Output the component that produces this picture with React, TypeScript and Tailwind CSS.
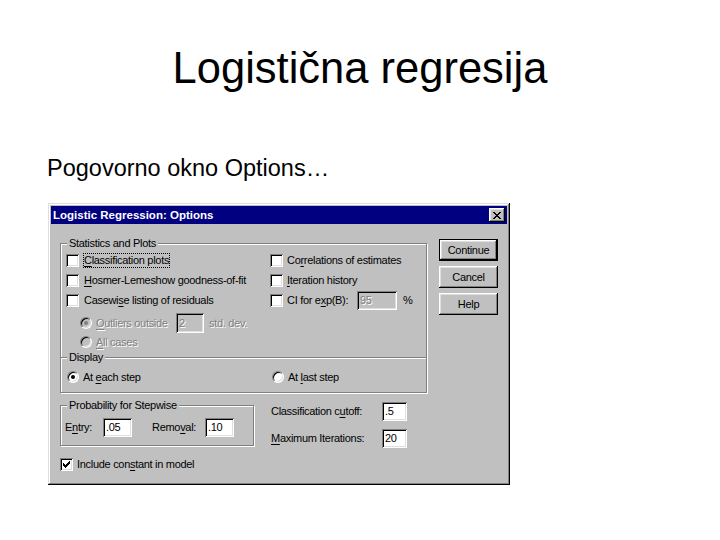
import React from 'react';

// Win95 style helpers
const sunken =
  'shadow-[inset_1px_1px_0_#808080,inset_-1px_-1px_0_#fff,inset_2px_2px_0_#000,inset_-2px_-2px_0_#dfdfdf]';
const raised =
  'shadow-[inset_-1px_-1px_0_#000,inset_1px_1px_0_#fff,inset_-2px_-2px_0_#808080,inset_2px_2px_0_#dfdfdf]';
const etched = 'border border-[#808080] shadow-[inset_1px_1px_0_#fff,1px_1px_0_#fff]';
const disabledText = 'text-[#808080] [text-shadow:1px_1px_0_#fff]';

function Hot({ text, at }: { text: string; at: number }) {
  if (at < 0) return <>{text}</>;
  return (
    <>
      {text.slice(0, at)}
      <span className="underline underline-offset-[2px] decoration-1">{text[at]}</span>
      {text.slice(at + 1)}
    </>
  );
}

function pixels(rows: string[]) {
  let d = '';
  rows.forEach((row, y) => {
    row.split('').forEach((c, x) => {
      if (c === 'x') d += `M${x} ${y}h1v1h-1z`;
    });
  });
  return d;
}

const checkMark = pixels([
  '......x',
  '.....xx',
  'x...xxx',
  'xx.xxx.',
  'xxxxx..',
  '.xxx...',
  '..x....',
]);

const closeGlyph = pixels([
  'xx....xx',
  '.xx..xx.',
  '..xxxx..',
  '...xx...',
  '..xxxx..',
  '.xx..xx.',
  'xx....xx',
]);

function Check({ checked = false }: { checked?: boolean }) {
  return (
    <span className={`w-[13px] h-[13px] shrink-0 bg-white flex items-center justify-center ${sunken}`}>
      {checked && (
        <svg width="7" height="7" viewBox="0 0 7 7" shapeRendering="crispEdges">
          <path d={checkMark} fill="#000" />
        </svg>
      )}
    </span>
  );
}

function Radio({ on = false, disabled = false }: { on?: boolean; disabled?: boolean }) {
  return (
    <span
      className={`w-[12px] h-[12px] shrink-0 rounded-full border border-t-[#808080] border-l-[#808080] border-r-white border-b-white shadow-[inset_1px_1px_0_#000,inset_-1px_-1px_0_#dfdfdf] flex items-center justify-center ${
        disabled ? 'bg-[#c0c0c0]' : 'bg-white'
      }`}
    >
      {on && <span className={`w-[4px] h-[4px] rounded-full ${disabled ? 'bg-[#808080]' : 'bg-black'}`} />}
    </span>
  );
}

function Field({ value, w, h = 'h-[19px]', disabled = false }: { value: string; w: string; h?: string; disabled?: boolean }) {
  return (
    <span
      className={`${w} ${h} shrink-0 flex items-center pl-[3px] ${sunken} ${
        disabled ? `bg-[#c0c0c0] ${disabledText}` : 'bg-white'
      }`}
    >
      {value}
    </span>
  );
}

function Button({ label, isDefault = false }: { label: string; isDefault?: boolean }) {
  return (
    <div
      className={`h-[22px] flex items-center justify-center bg-[#c0c0c0] ${
        isDefault ? 'border border-black' : ''
      } ${raised}`}
    >
      {label}
    </div>
  );
}

export default function App() {
  return (
    <div className="w-[720px] h-[540px] bg-white overflow-hidden text-black font-['Liberation_Sans',Arial,sans-serif]">
      <h1 className="pt-[43px] text-center text-[43.5px] leading-[50px]">Logistična regresija</h1>
      <p className="mt-[61px] ml-[47px] text-[23.5px] leading-[28px]">Pogovorno okno Options…</p>

      {/* dialog */}
      <div
        className={`ml-[48px] mt-[21px] w-[462px] h-[282px] bg-[#c0c0c0] flex flex-col text-[11px] leading-[13px] tracking-[-0.3px] shadow-[inset_-1px_-1px_0_#000,inset_1px_1px_0_#dfdfdf,inset_-2px_-2px_0_#808080,inset_2px_2px_0_#fff]`}
      >
        <div className="mx-[3px] mt-[3px] h-[18px] bg-[#000080] flex items-center justify-between pl-[2px] pr-[2px]">
          <span className="text-white font-bold text-[11.5px] tracking-normal">Logistic Regression: Options</span>
          <span className={`w-[16px] h-[14px] bg-[#c0c0c0] flex items-center justify-center ${raised}`}>
            <svg width="8" height="7" viewBox="0 0 8 7" shapeRendering="crispEdges">
              <path d={closeGlyph} fill="#000" />
            </svg>
          </span>
        </div>

        <div className="flex items-start pl-[12px]">
          <div className="w-[367px] mt-[19px] flex flex-col">
            {/* Statistics and Plots */}
            <div className={`relative h-[150px] ${etched} pt-[6px] pl-[5px]`}>
              <span className="absolute -top-[8px] left-[6px] px-[2px] bg-[#c0c0c0] leading-[14px]">Statistics and Plots</span>

              <div className="grid grid-cols-[204px_1fr]">
                <div className="h-[20px] flex items-center gap-[5px]">
                  <Check />
                  <span className="outline-1 outline-dotted outline-black">
                    <Hot text="Classification plots" at={0} />
                  </span>
                </div>
                <div className="h-[20px] flex items-center gap-[4px]">
                  <Check />
                  <span>
                    <Hot text="Correlations of estimates" at={2} />
                  </span>
                </div>
                <div className="h-[20px] flex items-center gap-[5px]">
                  <Check />
                  <span>
                    <Hot text="Hosmer-Lemeshow goodness-of-fit" at={0} />
                  </span>
                </div>
                <div className="h-[20px] flex items-center gap-[4px]">
                  <Check />
                  <span>
                    <Hot text="Iteration history" at={0} />
                  </span>
                </div>
                <div className="h-[20px] flex items-center gap-[5px]">
                  <Check />
                  <span>
                    <Hot text="Casewise listing of residuals" at={6} />
                  </span>
                </div>
                <div className="h-[20px] flex items-center gap-[4px]">
                  <Check />
                  <span className="w-[66px] shrink-0">
                    <Hot text="CI for exp(B):" at={8} />
                  </span>
                  <Field value="95" w="w-[40px]" disabled />
                  <span className="ml-[2px]">%</span>
                </div>
              </div>

              <div className="mt-[3px] h-[20px] flex items-center pl-[14px]">
                <Radio on disabled />
                <span className={`ml-[4px] w-[80px] shrink-0 ${disabledText}`}>
                  <Hot text="Outliers outside" at={0} />
                </span>
                <Field value="2" w="w-[28px]" h="h-[20px]" disabled />
                <span className={`ml-[5px] ${disabledText}`}>std. dev.</span>
              </div>
              <div className="h-[18px] flex items-center pl-[14px]">
                <Radio disabled />
                <span className={`ml-[4px] ${disabledText}`}>
                  <Hot text="All cases" at={0} />
                </span>
              </div>

              {/* Display */}
              <div className="relative mt-[6px] -ml-[5px] border-t border-[#808080] shadow-[0_1px_0_#fff]">
                <span className="absolute -top-[8px] left-[6px] px-[2px] bg-[#c0c0c0] leading-[14px]">Display</span>
              </div>
              <div className="mt-[9px] pl-[1px] grid grid-cols-[205px_1fr]">
                <div className="h-[20px] flex items-center gap-[4px]">
                  <Radio on />
                  <span>
                    <Hot text="At each step" at={3} />
                  </span>
                </div>
                <div className="h-[20px] flex items-center gap-[4px]">
                  <Radio />
                  <span>
                    <Hot text="At last step" at={3} />
                  </span>
                </div>
              </div>
            </div>

            <div className="flex items-start">
              {/* Probability for Stepwise */}
              <div className={`relative mt-[12px] w-[194px] h-[41px] ${etched} pt-[12px] pl-[4px]`}>
                <span className="absolute -top-[8px] left-[6px] px-[2px] bg-[#c0c0c0] leading-[14px]">
                  Probability for Stepwise
                </span>
                <div className="h-[19px] flex items-center">
                  <span className="w-[38px] shrink-0">
                    <Hot text="Entry:" at={1} />
                  </span>
                  <Field value=".05" w="w-[29px]" />
                  <span className="ml-[20px] w-[53px] shrink-0">
                    <Hot text="Removal:" at={4} />
                  </span>
                  <Field value=".10" w="w-[29px]" />
                </div>
              </div>

              <div className="ml-[17px] mt-[9px] flex flex-col gap-[8px]">
                <div className="h-[19px] flex items-center">
                  <span className="w-[111px] shrink-0">
                    <Hot text="Classification cutoff:" at={16} />
                  </span>
                  <Field value=".5" w="w-[25px]" />
                </div>
                <div className="h-[19px] flex items-center">
                  <span className="w-[111px] shrink-0">
                    <Hot text="Maximum Iterations:" at={0} />
                  </span>
                  <Field value="20" w="w-[25px]" />
                </div>
              </div>
            </div>

            <div className="mt-[10px] h-[13px] flex items-center gap-[4px]">
              <Check checked />
              <span>
                <Hot text="Include constant in model" at={11} />
              </span>
            </div>
          </div>

          {/* buttons */}
          <div className="ml-[12px] mt-[15px] w-[59px] flex flex-col gap-[5px]">
            <Button label="Continue" isDefault />
            <Button label="Cancel" />
            <Button label="Help" />
          </div>
        </div>
      </div>
    </div>
  );
}
